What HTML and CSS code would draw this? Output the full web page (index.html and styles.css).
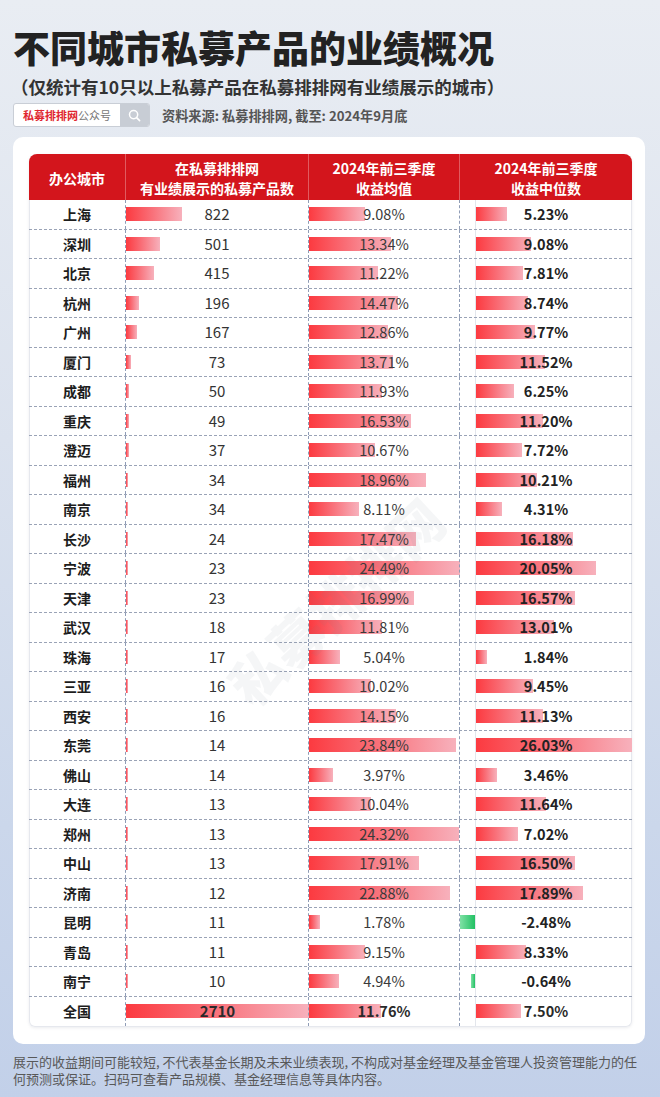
FILE: index.html
```html
<!DOCTYPE html>
<html lang="zh-CN">
<head>
<meta charset="utf-8">
<title>不同城市私募产品的业绩概况</title>
<link rel="stylesheet" href="styles.css">
</head>
<body>
<div class="page">
  <h1 class="title">不同城市私募产品的业绩概况</h1>
  <p class="subtitle">（仅统计有10只以上私募产品在私募排排网有业绩展示的城市）</p>
  <div class="meta">
    <div class="search">
      <span class="search-text"><b>私募排排网</b>公众号</span>
      <span class="search-btn">
        <svg width="13" height="13" viewBox="0 0 13 13"><circle cx="5.6" cy="5.6" r="4.1" fill="none" stroke="#fff" stroke-width="1.5"/><line x1="8.6" y1="8.6" x2="11.6" y2="11.6" stroke="#fff" stroke-width="1.6" stroke-linecap="round"/></svg>
      </span>
    </div>
    <span class="source">资料来源: 私募排排网, 截至: 2024年9月底</span>
  </div>

  <div class="card">
    <div class="table">
      <div class="row head">
        <div class="h">办公城市</div>
        <div class="h"><span class="hl">在私募排排网</span><span class="hl">有业绩展示的私募产品数</span></div>
        <div class="h"><span class="hl">2024年前三季度</span><span class="hl">收益均值</span></div>
        <div class="h"><span class="hl">2024年前三季度</span><span class="hl">收益中位数</span></div>
      </div>

      <div class="row"><div class="city">上海</div><div class="c cnt"><i class="bar" style="width:55.5px"></i><span class="val">822</span></div><div class="c avg"><i class="bar" style="width:55.8px"></i><span class="val">9.08%</span></div><div class="c med"><span class="neg"></span><span class="pos"><i class="bar" style="width:31.4px"></i></span><span class="val">5.23%</span></div></div>
      <div class="row"><div class="city">深圳</div><div class="c cnt"><i class="bar" style="width:33.8px"></i><span class="val">501</span></div><div class="c avg"><i class="bar" style="width:82px"></i><span class="val">13.34%</span></div><div class="c med"><span class="neg"></span><span class="pos"><i class="bar" style="width:54.5px"></i></span><span class="val">9.08%</span></div></div>
      <div class="row"><div class="city">北京</div><div class="c cnt"><i class="bar" style="width:28px"></i><span class="val">415</span></div><div class="c avg"><i class="bar" style="width:69px"></i><span class="val">11.22%</span></div><div class="c med"><span class="neg"></span><span class="pos"><i class="bar" style="width:46.9px"></i></span><span class="val">7.81%</span></div></div>
      <div class="row"><div class="city">杭州</div><div class="c cnt"><i class="bar" style="width:13.2px"></i><span class="val">196</span></div><div class="c avg"><i class="bar" style="width:89px"></i><span class="val">14.47%</span></div><div class="c med"><span class="neg"></span><span class="pos"><i class="bar" style="width:52.4px"></i></span><span class="val">8.74%</span></div></div>
      <div class="row"><div class="city">广州</div><div class="c cnt"><i class="bar" style="width:11.3px"></i><span class="val">167</span></div><div class="c avg"><i class="bar" style="width:79.1px"></i><span class="val">12.86%</span></div><div class="c med"><span class="neg"></span><span class="pos"><i class="bar" style="width:58.6px"></i></span><span class="val">9.77%</span></div></div>
      <div class="row"><div class="city">厦门</div><div class="c cnt"><i class="bar" style="width:4.9px"></i><span class="val">73</span></div><div class="c avg"><i class="bar" style="width:84.3px"></i><span class="val">13.71%</span></div><div class="c med"><span class="neg"></span><span class="pos"><i class="bar" style="width:69.1px"></i></span><span class="val">11.52%</span></div></div>
      <div class="row"><div class="city">成都</div><div class="c cnt"><i class="bar" style="width:3.4px"></i><span class="val">50</span></div><div class="c avg"><i class="bar" style="width:73.4px"></i><span class="val">11.93%</span></div><div class="c med"><span class="neg"></span><span class="pos"><i class="bar" style="width:37.5px"></i></span><span class="val">6.25%</span></div></div>
      <div class="row"><div class="city">重庆</div><div class="c cnt"><i class="bar" style="width:3.3px"></i><span class="val">49</span></div><div class="c avg"><i class="bar" style="width:101.7px"></i><span class="val">16.53%</span></div><div class="c med"><span class="neg"></span><span class="pos"><i class="bar" style="width:67.2px"></i></span><span class="val">11.20%</span></div></div>
      <div class="row"><div class="city">澄迈</div><div class="c cnt"><i class="bar" style="width:2.5px"></i><span class="val">37</span></div><div class="c avg"><i class="bar" style="width:65.6px"></i><span class="val">10.67%</span></div><div class="c med"><span class="neg"></span><span class="pos"><i class="bar" style="width:46.3px"></i></span><span class="val">7.72%</span></div></div>
      <div class="row"><div class="city">福州</div><div class="c cnt"><i class="bar" style="width:2.3px"></i><span class="val">34</span></div><div class="c avg"><i class="bar" style="width:116.6px"></i><span class="val">18.96%</span></div><div class="c med"><span class="neg"></span><span class="pos"><i class="bar" style="width:61.3px"></i></span><span class="val">10.21%</span></div></div>
      <div class="row"><div class="city">南京</div><div class="c cnt"><i class="bar" style="width:2.3px"></i><span class="val">34</span></div><div class="c avg"><i class="bar" style="width:49.9px"></i><span class="val">8.11%</span></div><div class="c med"><span class="neg"></span><span class="pos"><i class="bar" style="width:25.9px"></i></span><span class="val">4.31%</span></div></div>
      <div class="row"><div class="city">长沙</div><div class="c cnt"><i class="bar" style="width:2px"></i><span class="val">24</span></div><div class="c avg"><i class="bar" style="width:107.4px"></i><span class="val">17.47%</span></div><div class="c med"><span class="neg"></span><span class="pos"><i class="bar" style="width:97.1px"></i></span><span class="val">16.18%</span></div></div>
      <div class="row"><div class="city">宁波</div><div class="c cnt"><i class="bar" style="width:2px"></i><span class="val">23</span></div><div class="c avg"><i class="bar" style="width:150.6px"></i><span class="val">24.49%</span></div><div class="c med"><span class="neg"></span><span class="pos"><i class="bar" style="width:120.3px"></i></span><span class="val">20.05%</span></div></div>
      <div class="row"><div class="city">天津</div><div class="c cnt"><i class="bar" style="width:2px"></i><span class="val">23</span></div><div class="c avg"><i class="bar" style="width:104.5px"></i><span class="val">16.99%</span></div><div class="c med"><span class="neg"></span><span class="pos"><i class="bar" style="width:99.4px"></i></span><span class="val">16.57%</span></div></div>
      <div class="row"><div class="city">武汉</div><div class="c cnt"><i class="bar" style="width:2px"></i><span class="val">18</span></div><div class="c avg"><i class="bar" style="width:72.6px"></i><span class="val">11.81%</span></div><div class="c med"><span class="neg"></span><span class="pos"><i class="bar" style="width:78.1px"></i></span><span class="val">13.01%</span></div></div>
      <div class="row"><div class="city">珠海</div><div class="c cnt"><i class="bar" style="width:2px"></i><span class="val">17</span></div><div class="c avg"><i class="bar" style="width:31px"></i><span class="val">5.04%</span></div><div class="c med"><span class="neg"></span><span class="pos"><i class="bar" style="width:11px"></i></span><span class="val">1.84%</span></div></div>
      <div class="row"><div class="city">三亚</div><div class="c cnt"><i class="bar" style="width:2px"></i><span class="val">16</span></div><div class="c avg"><i class="bar" style="width:61.6px"></i><span class="val">10.02%</span></div><div class="c med"><span class="neg"></span><span class="pos"><i class="bar" style="width:56.7px"></i></span><span class="val">9.45%</span></div></div>
      <div class="row"><div class="city">西安</div><div class="c cnt"><i class="bar" style="width:2px"></i><span class="val">16</span></div><div class="c avg"><i class="bar" style="width:87px"></i><span class="val">14.15%</span></div><div class="c med"><span class="neg"></span><span class="pos"><i class="bar" style="width:66.8px"></i></span><span class="val">11.13%</span></div></div>
      <div class="row"><div class="city">东莞</div><div class="c cnt"><i class="bar" style="width:2px"></i><span class="val">14</span></div><div class="c avg"><i class="bar" style="width:146.6px"></i><span class="val">23.84%</span></div><div class="c med"><span class="neg"></span><span class="pos"><i class="bar" style="width:156.2px"></i></span><span class="val">26.03%</span></div></div>
      <div class="row"><div class="city">佛山</div><div class="c cnt"><i class="bar" style="width:2px"></i><span class="val">14</span></div><div class="c avg"><i class="bar" style="width:24.4px"></i><span class="val">3.97%</span></div><div class="c med"><span class="neg"></span><span class="pos"><i class="bar" style="width:20.8px"></i></span><span class="val">3.46%</span></div></div>
      <div class="row"><div class="city">大连</div><div class="c cnt"><i class="bar" style="width:2px"></i><span class="val">13</span></div><div class="c avg"><i class="bar" style="width:61.7px"></i><span class="val">10.04%</span></div><div class="c med"><span class="neg"></span><span class="pos"><i class="bar" style="width:69.8px"></i></span><span class="val">11.64%</span></div></div>
      <div class="row"><div class="city">郑州</div><div class="c cnt"><i class="bar" style="width:2px"></i><span class="val">13</span></div><div class="c avg"><i class="bar" style="width:149.6px"></i><span class="val">24.32%</span></div><div class="c med"><span class="neg"></span><span class="pos"><i class="bar" style="width:42.1px"></i></span><span class="val">7.02%</span></div></div>
      <div class="row"><div class="city">中山</div><div class="c cnt"><i class="bar" style="width:2px"></i><span class="val">13</span></div><div class="c avg"><i class="bar" style="width:110.1px"></i><span class="val">17.91%</span></div><div class="c med"><span class="neg"></span><span class="pos"><i class="bar" style="width:99px"></i></span><span class="val">16.50%</span></div></div>
      <div class="row"><div class="city">济南</div><div class="c cnt"><i class="bar" style="width:2px"></i><span class="val">12</span></div><div class="c avg"><i class="bar" style="width:140.7px"></i><span class="val">22.88%</span></div><div class="c med"><span class="neg"></span><span class="pos"><i class="bar" style="width:107.3px"></i></span><span class="val">17.89%</span></div></div>
      <div class="row"><div class="city">昆明</div><div class="c cnt"><i class="bar" style="width:2px"></i><span class="val">11</span></div><div class="c avg"><i class="bar" style="width:10.9px"></i><span class="val">1.78%</span></div><div class="c med"><span class="neg"><i class="bar green" style="width:14.9px"></i></span><span class="pos"></span><span class="val">-2.48%</span></div></div>
      <div class="row"><div class="city">青岛</div><div class="c cnt"><i class="bar" style="width:2px"></i><span class="val">11</span></div><div class="c avg"><i class="bar" style="width:56.3px"></i><span class="val">9.15%</span></div><div class="c med"><span class="neg"></span><span class="pos"><i class="bar" style="width:50px"></i></span><span class="val">8.33%</span></div></div>
      <div class="row"><div class="city">南宁</div><div class="c cnt"><i class="bar" style="width:2px"></i><span class="val">10</span></div><div class="c avg"><i class="bar" style="width:30.4px"></i><span class="val">4.94%</span></div><div class="c med"><span class="neg"><i class="bar green" style="width:3.8px"></i></span><span class="pos"></span><span class="val">-0.64%</span></div></div>
      <div class="row total"><div class="city">全国</div><div class="c cnt"><i class="bar" style="width:183px"></i><span class="val">2710</span></div><div class="c avg"><i class="bar" style="width:72.3px"></i><span class="val">11.76%</span></div><div class="c med"><span class="neg"></span><span class="pos"><i class="bar" style="width:45px"></i></span><span class="val">7.50%</span></div></div>
    </div>
    <div class="watermark">私募排排网</div>
  </div>

  <p class="note">展示的收益期间可能较短, 不代表基金长期及未来业绩表现, 不构成对基金经理及基金管理人投资管理能力的任何预测或保证。扫码可查看产品规模、基金经理信息等具体内容。</p>
</div>
</body>
</html>
```

FILE: styles.css
```css
* { box-sizing: border-box; }

html, body {
  margin: 0;
  padding: 0;
}

body {
  width: 660px;
  min-height: 1097px;
  font-family: "Noto Sans CJK SC", "Noto Sans", sans-serif;
  background: linear-gradient(180deg, #e9edf3 0%, #dbe2ee 40%, #cbd7eb 75%, #c2d0e9 100%);
  color: #333;
}

.page {
  padding: 24.5px 15px 14px 13px;
}

.title {
  margin: 0;
  font-size: 37px;
  line-height: 44px;
  font-weight: 900;
  color: #222;
  letter-spacing: 0;
}

.subtitle {
  margin: 6px 0 0 -2px;
  font-size: 17.5px;
  line-height: 24px;
  font-weight: 700;
  color: #333;
}

.meta {
  margin-top: 4.5px;
  display: flex;
  align-items: center;
  gap: 12px;
  height: 24px;
}

.search {
  display: flex;
  width: 137px;
  height: 24px;
  border: 1px solid #c9ced6;
  border-radius: 3px;
  background: #fff;
  overflow: hidden;
}

.search-text {
  flex: 1;
  display: flex;
  align-items: center;
  padding-left: 9px;
  font-size: 11px;
  color: #777;
  white-space: nowrap;
}

.search-text b {
  color: #e0262f;
  font-weight: 700;
}

.search-btn {
  width: 29px;
  background: #c8cdd5;
  display: flex;
  align-items: center;
  justify-content: center;
}

.source {
  font-size: 13.2px;
  font-weight: 700;
  color: #555;
  white-space: nowrap;
}

.card {
  position: relative;
  margin-top: 10px;
  background: #fff;
  border-radius: 10px;
  padding: 17px 13px 17px 16px;
  overflow: hidden;
}

.watermark {
  position: absolute;
  left: 187px;
  top: 437px;
  width: 270px;
  text-align: center;
  font-size: 54px;
  line-height: 54px;
  font-weight: 900;
  color: rgba(120, 128, 145, 0.07);
  transform: rotate(-43deg);
  transform-origin: center;
  white-space: nowrap;
  pointer-events: none;
}

.table {
  position: relative;
  border: 1px solid #e6e8ee;
  border-top: none;
  border-radius: 8px 8px 6px 6px;
  box-shadow: 0 1px 3px rgba(120, 130, 150, 0.15);
}

.row {
  display: grid;
  grid-template-columns: 96px 183px 151px 173px;
  height: 29.5px;
  border-bottom: 1px dashed #9aa3b6;
  margin: 0 -1px;
}

.row.total {
  border-bottom: none;
}

.row.head {
  height: 46px;
  background: #d3151c;
  border-bottom: none;
  border-radius: 8px 8px 0 0;
}

.h {
  display: flex;
  flex-direction: column;
  align-items: center;
  justify-content: center;
  text-align: center;
  color: #fff;
  font-size: 14px;
  font-weight: 700;
  line-height: 20px;
  padding-top: 2px;
}

.hl {
  display: block;
  height: 20px;
  line-height: 20px;
  white-space: nowrap;
}

.h + .h {
  border-left: 1px solid rgba(255, 255, 255, 0.3);
}

.city {
  display: flex;
  align-items: center;
  justify-content: center;
  font-size: 14px;
  font-weight: 700;
  color: #1d1d1d;
}

.c {
  display: grid;
  align-items: center;
  border-left: 1px dashed #8f9cb6;
}

.c > .bar,
.c > .val {
  grid-area: 1 / 1;
}

.bar {
  display: block;
  height: 14px;
  background: linear-gradient(90deg, #fc3a40 0%, #f96e77 45%, #f7b1bc 100%);
  justify-self: start;
}

.bar.green {
  background: linear-gradient(90deg, #7fe1a5 0%, #21c063 100%);
}

.val {
  justify-self: center;
  position: relative;
  font-size: 14.5px;
  line-height: 18px;
  color: #3a3a3a;
  white-space: nowrap;
}

.cnt .val {
  font-size: 15px;
  color: #333;
}

.med {
  grid-template-columns: 15px 1fr;
}

.med .neg {
  grid-column: 1;
  grid-row: 1;
  display: flex;
  justify-content: flex-end;
  align-items: center;
  height: 100%;
}

.med .pos {
  grid-column: 2;
  grid-row: 1;
  display: flex;
  align-items: center;
  height: 100%;
  border-left: 1px solid #e3e6ec;
}

.med .val {
  grid-column: 1 / -1;
  grid-row: 1;
  font-weight: 700;
  color: #222;
}

.total .val {
  font-weight: 700;
  color: #2a2a2a;
}

.note {
  margin: 9px 0 0 0;
  font-size: 13px;
  line-height: 17px;
  color: #585858;
  width: 634px;
}
```
